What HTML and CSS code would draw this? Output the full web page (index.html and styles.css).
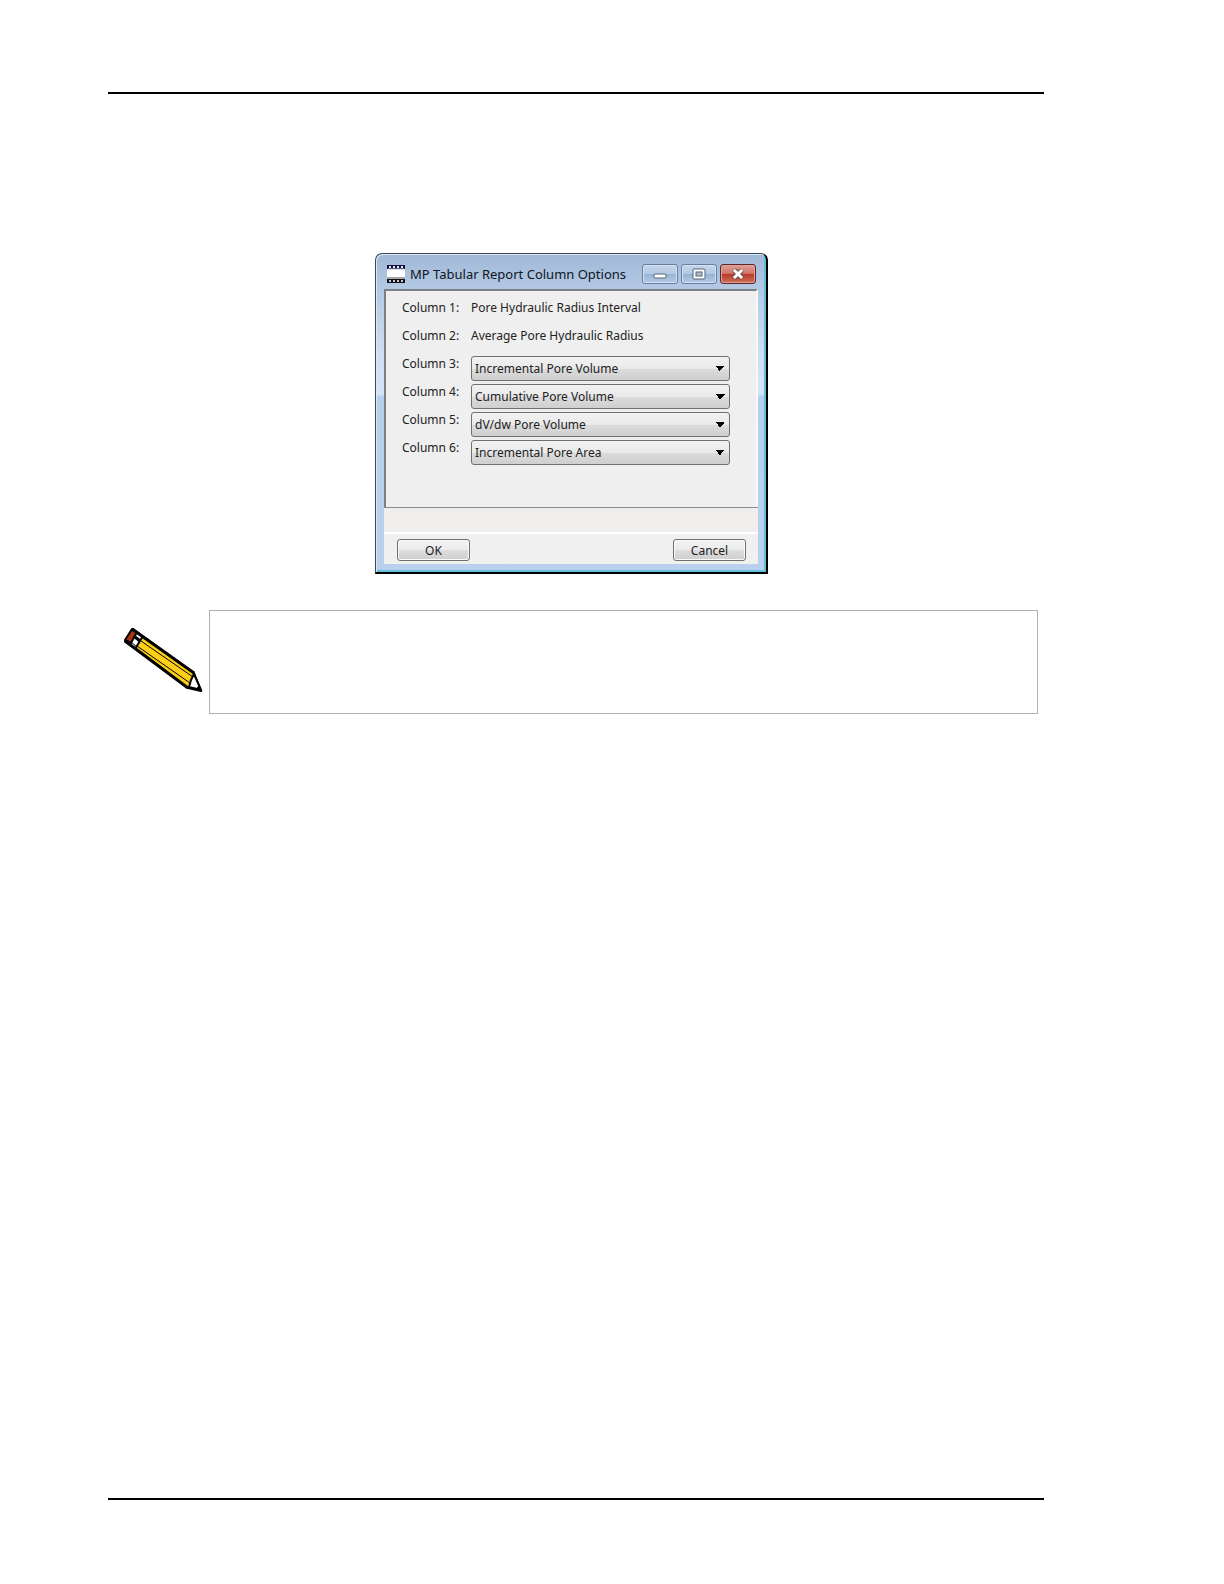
FILE: index.html
```html
<!DOCTYPE html>
<html lang="en">
<head>
  <meta charset="UTF-8">
  <title>MP Tabular Report Column Options</title>
  <link rel="stylesheet" href="styles.css">
</head>
<body>

  <main class="page">
    <div class="figure">
      <section class="window" aria-labelledby="title">
        <header class="titlebar">
          <svg class="app-icon" width="18" height="18" viewBox="0 0 18 18">
            <rect width="18" height="18" fill="#fff"/>
            <rect width="18" height="4" fill="#101040"/>
            <path d="M2 2h2M6 2h2M10 2h2M14 2h2" stroke="#e8e8f4" stroke-width="2"/>
            <path d="M1 4h16" stroke="#b8b8cc" stroke-width="1"/>
            <rect y="12" width="18" height="3" fill="#a8a8a8"/>
            <rect y="14" width="18" height="4" fill="#101018"/>
            <path d="M2 16h2M6 16h2M10 16h2M14 16h2" stroke="#c8c8d0" stroke-width="2"/>
          </svg>
          <h1 class="title" id="title">MP Tabular Report Column Options</h1>
          <div class="controls">
            <button class="control" type="button" aria-label="Minimize">
              <svg width="14" height="12" viewBox="0 0 14 12">
                <rect x="1" y="6" width="12" height="4" rx="1" fill="#fff" stroke="#596579"/>
              </svg>
            </button>
            <button class="control" type="button" aria-label="Maximize">
              <svg width="14" height="12" viewBox="0 0 14 12">
                <rect x="1" y="1" width="12" height="10" rx="1" fill="#fff" stroke="#596579"/>
                <rect x="4" y="4" width="6" height="4" fill="#a9bdd8" stroke="#596579"/>
              </svg>
            </button>
            <button class="control close" type="button" aria-label="Close">
              <svg width="14" height="12" viewBox="0 0 14 12">
                <path d="M3 2l8 8M11 2l-8 8" stroke="#6d4a50" stroke-width="5"/>
                <path d="M3 2l8 8M11 2l-8 8" stroke="#fff" stroke-width="3"/>
              </svg>
            </button>
          </div>
        </header>

        <form class="client">
          <div class="options">
            <span>Column 1:</span>
            <span>Pore Hydraulic Radius Interval</span>

            <span>Column 2:</span>
            <span>Average Pore Hydraulic Radius</span>

            <label for="column3">Column 3:</label>
            <select id="column3">
              <option>Incremental Pore Volume</option>
              <option>Cumulative Pore Volume</option>
              <option>dV/dw Pore Volume</option>
              <option>Incremental Pore Area</option>
            </select>

            <label for="column4">Column 4:</label>
            <select id="column4">
              <option>Incremental Pore Volume</option>
              <option selected>Cumulative Pore Volume</option>
              <option>dV/dw Pore Volume</option>
              <option>Incremental Pore Area</option>
            </select>

            <label for="column5">Column 5:</label>
            <select id="column5">
              <option>Incremental Pore Volume</option>
              <option>Cumulative Pore Volume</option>
              <option selected>dV/dw Pore Volume</option>
              <option>Incremental Pore Area</option>
            </select>

            <label for="column6">Column 6:</label>
            <select id="column6">
              <option>Incremental Pore Volume</option>
              <option>Cumulative Pore Volume</option>
              <option>dV/dw Pore Volume</option>
              <option selected>Incremental Pore Area</option>
            </select>
          </div>

          <div class="status"></div>

          <div class="buttons">
            <button class="button" type="button">OK</button>
            <button class="button" type="button">Cancel</button>
          </div>
        </form>
      </section>
    </div>

    <div class="note">
      <svg class="pencil" width="80" height="66" viewBox="0 0 80 66">
        <!-- body -->
        <path d="M10 2L71 46L78 64L65 61L2 14Z" fill="#fdd017" stroke="#000" stroke-width="2" stroke-linejoin="round"/>
        <!-- ferrule -->
        <path d="M13 4L21 9L12 21L5 15Z" fill="#fff"/>
        <path d="M20 9L12 22" stroke="#000" stroke-width="2"/>
        <path d="M12 10L17 14" stroke="#000" stroke-width="3"/>
        <path d="M8 15L14 20" stroke="#000" stroke-width="1"/>
        <!-- eraser -->
        <path d="M9 2L14 5L8 16L2 13Z" fill="#a93412" stroke="#000" stroke-width="2" stroke-linejoin="round"/>
        <!-- edges -->
        <path d="M18 14L70 50M14 19L67 56" stroke="#000" stroke-width="1"/>
        <path d="M9 2L71 46M2 14L65 61" stroke="#000" stroke-width="3"/>
        <!-- tip -->
        <path d="M71 47L78 63L66 60L68 53Z" fill="#fff" stroke="#000" stroke-width="2" stroke-linejoin="round"/>
        <path d="M76 59L79 64L73 62Z" fill="#000" stroke="#000"/>
      </svg>
      <div class="note-box"></div>
    </div>
  </main>

</body>
</html>
```
FILE: styles.css
```css
* {
  box-sizing: border-box;
}

body {
  margin: 0;
  padding: 92px 180px 84px 108px;
  min-height: 100vh;
  display: flex;
  background-color: #fff;
  color: #222;
  font-family: "Noto Sans", sans-serif;
  font-size: 12px;
}

.page {
  flex: 1;
  border-top: 2px solid #000;
  border-bottom: 2px solid #000;
}

.figure {
  display: flex;
  justify-content: center;
  padding: 159px 9px 36px 0;
}

/* dialog window */
.window {
  width: 393px;
  padding: 0 8px 8px;
  border: 1px solid #3c4654;
  border-right: 2px solid #000;
  border-bottom: 2px solid #000;
  border-radius: 7px 7px 0 0;
  background: linear-gradient(#a0b9d8, #b4c9e3 36px, #cfdff2 100px, #d5e5f6 140px, #b5cfed 143px, #b9d1ee);
  box-shadow: inset 1px 1px 0 #dce8f5, inset -2px -2px 0 #62bfdc;
}

.titlebar {
  display: flex;
  align-items: center;
  height: 35px;
  padding: 5px 2px 0 3px;
}

.title {
  flex: 1;
  margin: 0 0 0 5px;
  color: #10151f;
  font-size: 13px;
  font-weight: normal;
  white-space: nowrap;
}

.controls {
  display: flex;
  gap: 3px;
}

.control {
  display: flex;
  align-items: center;
  justify-content: center;
  width: 36px;
  height: 20px;
  padding: 0;
  border: 1px solid #697f9f;
  border-radius: 3px;
  background: linear-gradient(#c5d6ea, #b3c8e2 50%, #98b2d1 51%, #b4cce8);
  box-shadow: inset 0 0 0 1px #d3e1f1;
}

.close {
  border-color: #602630;
  background: linear-gradient(#dfa195, #ce7264 50%, #b43a2a 51%, #cf7358);
  box-shadow: inset 0 0 0 1px #dda397;
}

.client {
  background-color: #f0f0f0;
}

.options {
  display: grid;
  grid-template-columns: 69px 1fr;
  grid-auto-rows: 28px;
  align-items: start;
  height: 218px;
  padding: 9px 26px 0 16px;
  border-top: 2px solid #7c8187;
  border-left: 2px solid #7c8187;
  border-right: 2px solid #fafafa;
  background-color: #efefef;
  line-height: 16px;
}

select {
  appearance: none;
  width: 100%;
  height: 25px;
  padding: 0 3px;
  border: 1px solid #707070;
  border-radius: 3px;
  /* the two halves of the arrow, then the face */
  background:
    linear-gradient(to top right, transparent 50%, #000 50%) right 9px center / 5px 5px no-repeat,
    linear-gradient(to top left, transparent 50%, #000 50%) right 4px center / 5px 5px no-repeat,
    linear-gradient(#f2f2f2, #e9e9e9 50%, #dcdcdc 51%, #cfcfcf);
  color: #222;
  font: inherit;
}

.status {
  height: 27px;
  border-top: 1px solid #8c8c8c;
  border-bottom: 2px solid #fff;
  background-color: #f0eeed;
}

.buttons {
  display: flex;
  justify-content: space-between;
  padding: 5px 12px 3px 13px;
}

.button {
  width: 73px;
  height: 22px;
  padding: 0;
  border: 1px solid #707070;
  border-radius: 3px;
  background: linear-gradient(#f3f3f3, #ebebeb 50%, #dddddd 51%, #cfcfcf);
  box-shadow: inset 0 0 0 1px #fafafa;
  color: #222;
  font: inherit;
}

/* note with pencil */
.note {
  display: grid;
  grid-template-columns: 86px 1fr;
  padding: 0 6px 0 15px;
}

.pencil {
  margin-top: 17px;
}

.note-box {
  height: 104px;
  border: 1px solid #b0b0b0;
}
```
